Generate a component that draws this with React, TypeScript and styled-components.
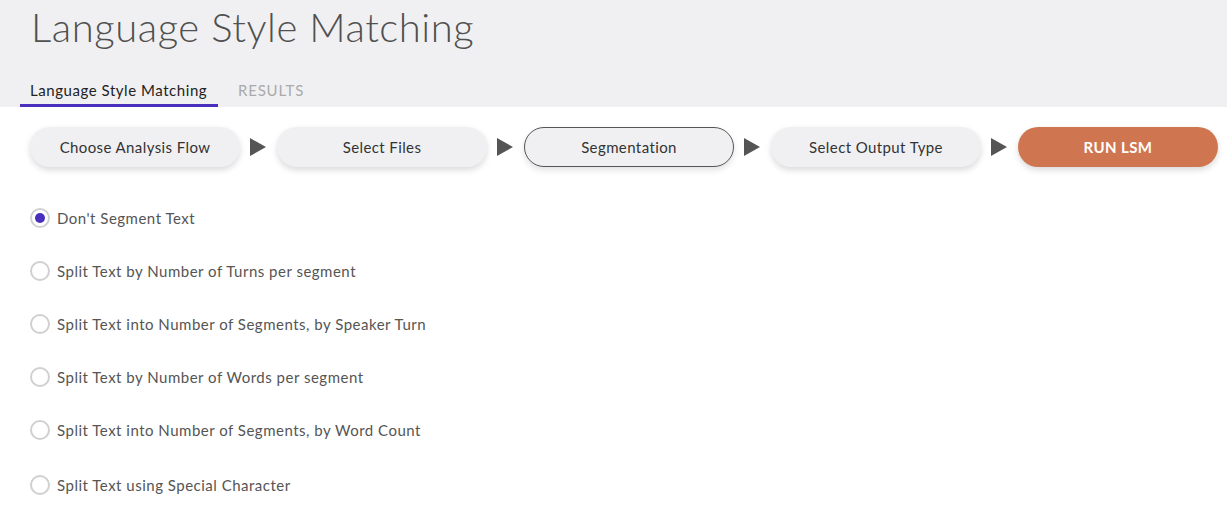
import React, { useState } from "react";
import styled, { createGlobalStyle } from "styled-components";

const Global = createGlobalStyle`
  html, body { margin: 0; padding: 0; background: #fff; }
  body { font-family: "Lato", "Open Sans", sans-serif; color: #555; }
  * { box-sizing: border-box; }
`;

const Header = styled.header`
  background: #f0f0f2;
  height: 107px;
  display: flex;
  flex-direction: column;
`;

const Title = styled.h1`
  margin: 0;
  padding: 2px 0 0 31px;
  font-weight: 300;
  font-size: 40px;
  line-height: 50px;
  color: #505050;
  letter-spacing: 0.55px;
`;

const Tabs = styled.nav`
  margin-top: auto;
  display: flex;
  padding-left: 20px;
  gap: 10px;
`;

const Tab = styled.div<{ $active?: boolean }>`
  padding: 0 10px;
  height: 31px;
  display: flex;
  align-items: center;
  font-size: 15px;
  letter-spacing: ${(p) => (p.$active ? "0.55px" : "0.8px")};
  color: ${(p) => (p.$active ? "#222" : "#aaa")};
  border-bottom: 3px solid ${(p) => (p.$active ? "#4a2fbd" : "transparent")};
  width: ${(p) => (p.$active ? "198px" : "auto")};
  white-space: nowrap;
`;

const Steps = styled.div`
  display: flex;
  align-items: center;
  padding: 20px 0 0 30px;
`;

const Pill = styled.div<{ $variant?: "current" | "run" }>`
  width: ${(p) => (p.$variant === "run" ? "200px" : "210px")};
  height: 40px;
  border-radius: 20px;
  display: flex;
  align-items: center;
  justify-content: center;
  font-size: 15px;
  letter-spacing: 0.4px;
  background: ${(p) => (p.$variant === "run" ? "#cf7650" : "#f0f0f2")};
  color: ${(p) => (p.$variant === "run" ? "#fff" : "#333")};
  font-weight: ${(p) => (p.$variant === "run" ? 700 : 400)};
  border: ${(p) => (p.$variant === "current" ? "1px solid #555" : "none")};
  box-shadow: ${(p) =>
    p.$variant === "current" ? "0 3px 6px rgba(0,0,0,0.12)" : "0 3px 6px rgba(0,0,0,0.15)"};
`;

const Arrow = styled.svg`
  width: 16px;
  height: 18px;
  flex: none;
  margin: 0 11px 0 10px;
`;

const Options = styled.div`
  display: flex;
  flex-direction: column;
  padding: 41px 0 0 30px;
`;

const Option = styled.label<{ $gap: number }>`
  display: flex;
  align-items: center;
  gap: 7px;
  height: 20px;
  margin-bottom: ${(p) => p.$gap}px;
  font-size: 15px;
  letter-spacing: 0.5px;
  color: #555;
  cursor: pointer;
`;

const Radio = styled.span<{ $checked?: boolean }>`
  width: 20px;
  height: 20px;
  border-radius: 50%;
  border: 2px solid #d0d0d0;
  background: #fff;
  display: flex;
  align-items: center;
  justify-content: center;
  flex: none;
  &::after {
    content: "";
    width: 10px;
    height: 10px;
    border-radius: 50%;
    background: ${(p) => (p.$checked ? "#4a2fbd" : "transparent")};
  }
`;

const StepArrow = () => (
  <Arrow viewBox="0 0 16 18">
    <polygon points="0,0 16,9 0,18" fill="#555" />
  </Arrow>
);

const options = [
  "Don't Segment Text",
  "Split Text by Number of Turns per segment",
  "Split Text into Number of Segments, by Speaker Turn",
  "Split Text by Number of Words per segment",
  "Split Text into Number of Segments, by Word Count",
  "Split Text using Special Character",
];

export default function App() {
  const [sel, setSel] = useState(0);
  return (
    <>
      <Global />
      <Header>
        <Title>Language Style Matching</Title>
        <Tabs>
          <Tab $active>Language Style Matching</Tab>
          <Tab>RESULTS</Tab>
        </Tabs>
      </Header>
      <Steps>
        <Pill>Choose Analysis Flow</Pill>
        <StepArrow />
        <Pill>Select Files</Pill>
        <StepArrow />
        <Pill $variant="current">Segmentation</Pill>
        <StepArrow />
        <Pill>Select Output Type</Pill>
        <StepArrow />
        <Pill $variant="run">RUN LSM</Pill>
      </Steps>
      <Options>
        {options.map((o, i) => (
          <Option key={o} $gap={i === 4 ? 35 : 33} onClick={() => setSel(i)}>
            <Radio $checked={sel === i} />
            {o}
          </Option>
        ))}
      </Options>
    </>
  );
}
